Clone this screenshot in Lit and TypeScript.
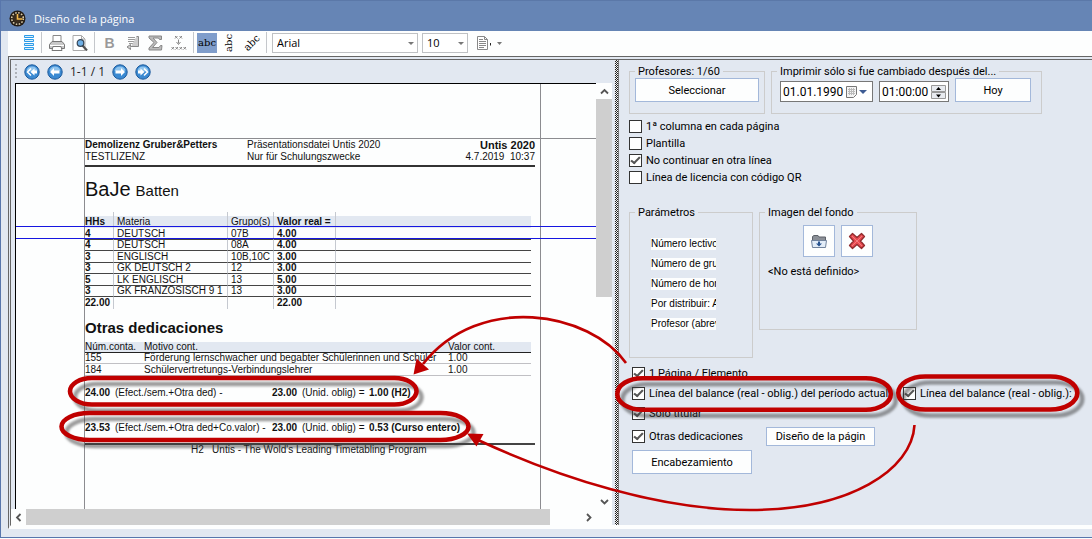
import { LitElement, html, css, svg } from "lit";
import { customElement, property } from "lit/decorators.js";

interface Lesson { hours: string; subject: string; group: string; value: string; }
interface Duty { account: string; reason: string; value: string; }

const LESSONS: Lesson[] = [
  { hours: "4", subject: "DEUTSCH", group: "07B", value: "4.00" },
  { hours: "4", subject: "DEUTSCH", group: "08A", value: "4.00" },
  { hours: "3", subject: "ENGLISCH", group: "10B,10C", value: "3.00" },
  { hours: "3", subject: "GK DEUTSCH 2", group: "12", value: "3.00" },
  { hours: "5", subject: "LK ENGLISCH", group: "13", value: "5.00" },
  { hours: "3", subject: "GK FRANZÖSISCH 9 1", group: "13", value: "3.00" },
];

const DUTIES: Duty[] = [
  { account: "155", reason: "Förderung lernschwacher und begabter Schülerinnen und Schüler", value: "1.00" },
  { account: "184", reason: "Schülervertretungs-Verbindungslehrer", value: "1.00" },
];

const PARAMETERS = [
  "Número lectivo",
  "Número de grupo",
  "Número de horas",
  "Por distribuir: Aula",
  "Profesor (abrev.)",
];

const base = css`
  *, *::before, *::after { box-sizing: border-box; }
  button, input, select {
    font: inherit;
    color: inherit;
    margin: 0;
    padding: 0;
    border-radius: 0;
  }
  svg { display: block; }
`;

/** Tick box with its label. */
@customElement("check-option")
class CheckOption extends LitElement {
  static styles = [base, css`
    :host { display: block; }
    .option { display: flex; align-items: center; gap: 4px; line-height: 13px; white-space: nowrap; }
    .box {
      appearance: none;
      flex: none;
      width: 13px;
      height: 13px;
      border: 1px solid #333;
      background: #fff;
      display: grid;
      place-items: center;
    }
    .box:checked::before {
      content: "";
      width: 9px;
      height: 5px;
      margin-top: -3px;
      border-left: 2px solid #555;
      border-bottom: 2px solid #555;
      transform: rotate(-45deg) skewX(8deg);
    }
  `];
  @property() label = "";
  @property({ type: Boolean }) checked = false;
  render() {
    return html`<label class="option"><input class="box" type="checkbox" .checked=${this.checked} />${this.label}</label>`;
  }
}

/** Window caption. */
@customElement("title-bar")
class TitleBar extends LitElement {
  static styles = [base, css`
    :host {
      display: flex;
      align-items: center;
      gap: 8px;
      height: 31px;
      padding: 5px 8px 0;
      border-top: 1px solid #5b78a8;
      background: #6685b5;
      color: #fff;
      font: 11px/18px "Open Sans", "Noto Sans", sans-serif;
    }
    .title { font: inherit; margin: 0; }
  `];
  render() {
    return html`
      <svg width="17" height="17" viewBox="0 0 17 17" aria-hidden="true">
        <circle cx="8.5" cy="8.500" r="8" fill="#241c14" />
        <circle cx="8.500" cy="8.500" r="5.800" fill="none" stroke="#d8c9a8" stroke-width="1.600" stroke-dasharray="1.600 1.430" />
        <circle cx="8.500" cy="8.500" r="4.600" fill="#3a2c1c" />
        <path d="M8.500 4v5h5" fill="none" stroke="#f5b94a" stroke-width="1.600" />
      </svg>
      <h1 class="title">Diseño de la página</h1>`;
  }
}

/** Formatting commands. */
@customElement("format-bar")
class FormatBar extends LitElement {
  static styles = [base, css`
    :host {
      display: flex;
      align-items: center;
      height: 25px;
      padding: 0 11px 2px;
      background: #fdfefe;
      font: 11px "Open Sans", "Noto Sans", sans-serif;
      color: #000;
    }
    .tool {
      width: 23px;
      height: 20px;
      flex: none;
      display: grid;
      place-items: center;
      border: 0;
      background: none;
    }
    .first { width: 19px; }
    .pressed { width: 20px; background: #7f9dcb; }
    .rule { flex: none; width: 1px; height: 21px; background: #c4c7cb; margin: 0 3px; }
    .picks { display: flex; gap: 4px; margin-left: 2px; }
    .pick { position: relative; flex: none; }
    .field {
      appearance: none;
      display: block;
      height: 20px;
      border: 1px solid #bfc1c4;
      background: #fff;
      padding-left: 4px;
      line-height: 18px;
    }
    .family { width: 146px; }
    .size { width: 46px; }
    .caret { position: absolute; right: 4px; top: 9px; pointer-events: none; }
    .abc { font: 10px/12px "DejaVu Serif", serif; }
    .up { transform: rotate(-90deg); }
    .slant { transform: rotate(-45deg); }
    .menu { width: 32px; margin-left: 5px; }
    .bold { font: bold 14px/16px "Liberation Sans", sans-serif; color: #9a9a9a; }
  `];
  render() {
    return html`
      <button class="tool first" aria-label="Diseño">
        <svg width="10" height="15" viewBox="0 0 10 15" fill="#d9effb" stroke="#2b9be8">
          <path d="M.5.5h9v2h-9zM.5 4.500h9v2h-9zM.5 8.500h9v2h-9zM.5 12.500h9v2h-9z" />
        </svg>
      </button>
      <span class="rule"></span>
      <button class="tool" aria-label="Imprimir">
        <svg width="16" height="16" viewBox="0 0 16 16">
          <path d="M4 .5h8V7H4z" fill="#fff" stroke="#888" />
          <path d="M3 6.500h10l2.500 3v4H.5v-4z" fill="#c8c8c8" stroke="#777" />
          <path d="M1 10.500h14" stroke="#fff" />
          <path d="M4 11.500h8l1 4H3z" fill="#fff" stroke="#777" />
        </svg>
      </button>
      <button class="tool" aria-label="Vista previa">
        <svg width="16" height="16" viewBox="0 0 16 16">
          <path d="M1 .5h8.500L13 4v11.500H1z" fill="#fff" stroke="#aaa" />
          <path d="M9.500.5V4H13" fill="none" stroke="#aaa" />
          <path d="M10.500 10.500l4.500 5" stroke="#555" stroke-width="2.200" />
          <circle cx="8.500" cy="8" r="3.300" fill="#6fb0e6" stroke="#345" stroke-width="1.200" />
        </svg>
      </button>
      <span class="rule"></span>
      <button class="tool bold" aria-label="Negrita">B</button>
      <button class="tool" aria-label="Ajuste de línea">
        <svg width="14" height="15" viewBox="0 0 14 15" fill="none" stroke="#999">
          <path d="M2 2.500h7M2 4.500h7M2 6.500h7M3 8.500h6" />
          <path d="M10.500 1.500h2v10h-8V9.500L1 12l3.500 2.500v-2" fill="#ccc" stroke="#888" />
        </svg>
      </button>
      <button class="tool" aria-label="Sumar">
        <svg width="15" height="16" viewBox="0 0 15 16" fill="#bbb" stroke="#888">
          <path d="M1 1h12.500v3.500h-2L10.500 3H5l4 4.500L4.500 12.500H11l1.500-2h1.500L13.500 15H1v-2l5-5.500L1 3z" />
        </svg>
      </button>
      <button class="tool" aria-label="Espacio">
        <svg width="16" height="16" viewBox="0 0 16 16" fill="none" stroke="#888">
          <path d="M4 1l2.500 2.500M6.500 1L4 3.500M8.500 1L11 3.500M11 1L8.500 3.500M.5 12L3 14.500M3 12L.5 14.500M4.500 12L7 14.500M7 12l-2.500 2.500M8.500 12l2.500 2.500M11 12l-2.500 2.500M12.500 12l2.500 2.500M15 12l-2.500 2.500" />
          <path d="M7.500 4.500v4M5.500 7l2 2.500 2-2.500" />
        </svg>
      </button>
      <span class="rule"></span>
      <button class="tool pressed" aria-pressed="true"><span class="abc">abc</span></button>
      <button class="tool" aria-pressed="false"><span class="abc up">abc</span></button>
      <button class="tool" aria-pressed="false"><span class="abc slant">abc</span></button>
      <span class="rule"></span>
      <div class="picks">
        <div class="pick">
          <select class="field family" aria-label="Fuente"><option>Arial</option></select>
          ${this.caret()}
        </div>
        <div class="pick">
          <select class="field size" aria-label="Tamaño"><option>10</option></select>
          ${this.caret()}
        </div>
      </div>
      <button class="tool menu" aria-label="Página">
        <svg width="26" height="14" viewBox="0 0 26 14" fill="none" stroke="#888">
          <path d="M1.500.5h7l3 3v10h-10zM8.500.5v3h3" fill="#fff" />
          <path d="M3 3.500h4M3 5.500h7M3 7.500h7M3 9.500h7M3 11.500h5" />
          <path d="M14.500 7v2.500" stroke="#222" />
          <path d="M21 6h5l-2.500 3z" fill="#777" stroke="none" />
        </svg>
      </button>`;
  }
  private caret() {
    return html`<svg class="caret" width="6" height="3" viewBox="0 0 6 3"><path d="M0 0h6L3 3z" fill="#777" /></svg>`;
  }
}

/** Page turning strip over the preview. */
@customElement("page-turner")
class PageTurner extends LitElement {
  static styles = [base, css`
    :host {
      display: flex;
      align-items: center;
      gap: 7px;
      height: 23px;
      padding-left: 4px;
      font: 12px "Open Sans", "Noto Sans", sans-serif;
      color: #222;
    }
    .grip { flex: none; width: 2px; height: 16px; background: repeating-linear-gradient(#aeb2b8 0 2px, transparent 2px 4px); }
    .turn { width: 16px; height: 16px; border: 0; background: none; }
  `];
  private turn(name: string, mark: unknown) {
    return html`<button class="turn" aria-label=${name}>
      <svg width="16" height="16" viewBox="0 0 16 16">
        <circle cx="8" cy="8" r="7.200" fill="#3b8ad2" stroke="#1c5a9c" />
        <path d="M2.500 6.500a5.800 5.800 0 0 1 11 0q-5.500 2.500-11 0z" fill="#8fc4ee" />
        ${mark}
      </svg>
    </button>`;
  }
  render() {
    const one = "M3 8l4-4v2.500h5.500v3H7V12z";
    return html`
      <span class="grip"></span>
      ${this.turn("Primera", svg`<path d="M7 4.500L3.500 8 7 11.500" fill="none" stroke="#fff" stroke-width="1.600" /><path d="M6.500 8l4-3.500v2H13v3h-2.500v2z" fill="#fff" />`)}
      ${this.turn("Anterior", svg`<path d=${one} fill="#fff" />`)}
      <span class="place">1-1 / 1</span>
      ${this.turn("Siguiente", svg`<path d=${one} fill="#fff" transform="rotate(180 8 8)" />`)}
      ${this.turn("Última", svg`<path d="M9 4.500L12.500 8 9 11.500" fill="none" stroke="#fff" stroke-width="1.600" /><path d="M9.500 8l-4-3.500v2H3v3h2.500v2z" fill="#fff" />`)}`;
  }
}

/** The printed report. */
@customElement("report-sheet")
class ReportSheet extends LitElement {
  static styles = [base, css`
    :host {
      display: block;
      position: relative;
      overflow: hidden;
      border: solid #000;
      border-width: 1px 0 0 1px;
      background: #fdfefe;
      color: #111;
      font: 10px/12px "Liberation Sans", Arial, sans-serif;
      padding: 55px 61px 0 69px;
    }
    .guide { position: absolute; background: #8c8c90; }
    .top { left: 0; right: 0; top: 54px; height: 1px; }
    .left { left: 68px; top: 0; bottom: 0; width: 1px; }
    .right { right: 55px; top: 0; bottom: 0; width: 1px; }
    .band { position: absolute; left: 0; right: 0; top: 142px; height: 13px; border: solid #1616e0; border-width: 1px 0; }
    .head { display: grid; grid-template-columns: 162px 1fr auto; align-content: start; height: 28px; border-bottom: 2px solid #333; }
    .strong { font-weight: bold; }
    .end { text-align: right; white-space: pre; }
    .edition { font-size: 11px; }
    .name { display: flex; align-items: baseline; gap: 5px; margin: 8px 0 0; font-size: 15px; line-height: 28px; font-weight: normal; }
    .short { font-size: 20px; }
    .lessons, .duties { border-collapse: separate; border-spacing: 0; table-layout: fixed; width: 446px; line-height: 11px; }
    .lessons { margin-top: 7px; }
    .lessons th, .lessons td { padding: 0 0 0 3px; text-align: left; white-space: nowrap; vertical-align: top; border-left: 1px solid #c5c9d0; font-weight: normal; height: 12px; }
    .lessons tr > :first-child { padding-left: 0; border-left: 0; }
    .lessons .lead { height: 4px; line-height: 4px; }
    .lessons .title { background: #e2e8f1; }
    .lessons .entry { border-bottom: 1px solid #444; }
    .lessons .tight { height: 11px; line-height: 10px; }
    .lessons .strong { font-weight: bold; }
    .c1 { width: 28px; } .c2 { width: 114px; } .c3 { width: 46px; } .c4 { width: 62px; }
    .section { margin: 9px 0 4px; font-size: 15px; line-height: 20px; font-weight: bold; }
    .duties th, .duties td { padding: 0; text-align: left; font-weight: normal; white-space: nowrap; line-height: 10px; height: 11px; border-bottom: 1px solid #c0c0c4; }
    .duties th { background: #e2e8f1; border-color: #222; }
    .duties .roomy { line-height: 11px; height: 12px; }
    .d1 { width: 59px; } .d2 { width: 304px; }
    .balance { display: grid; grid-template-columns: 30px 157px 30px 67px 1fr; white-space: nowrap; margin: 11px 0 23px; }
    .last { margin-bottom: 9px; }
    .foot { border-top: 2px solid #444; padding-left: 106px; line-height: 10px; white-space: pre; }
  `];
  private balance(total: string, formula: string, result: string, last = false) {
    return html`<div class="balance ${last ? "last" : ""}">
      <span class="strong">${total}</span><span>${formula}</span><span class="strong">23.00</span><span>(Unid. oblig) =</span><span class="strong">${result}</span>
    </div>`;
  }
  render() {
    return html`
      <div class="head">
        <span class="strong">Demolizenz Gruber&amp;Petters</span><span>Präsentationsdatei Untis 2020</span><span class="strong end edition">Untis 2020</span>
        <span>TESTLIZENZ</span><span>Nur für Schulungszwecke</span><span class="end">4.7.2019  10:37</span>
      </div>
      <h2 class="name"><span class="short">BaJe</span><span>Batten</span></h2>
      <table class="lessons">
        <colgroup><col class="c1" /><col class="c2" /><col class="c3" /><col class="c4" /><col /></colgroup>
        <thead>
          <tr><td class="lead"></td><td class="lead"></td><td class="lead"></td><td class="lead"></td><td class="lead"></td></tr>
          <tr><th class="title strong">HHs</th><th class="title">Materia</th><th class="title">Grupo(s)</th><th class="title strong">Valor real =</th><th class="title"></th></tr>
        </thead>
        <tbody>
          ${LESSONS.map((l, i) => {
            const c = i % 2 ? "entry tight" : "entry";
            return html`<tr><td class="${c} strong">${l.hours}</td><td class=${c}>${l.subject}</td><td class=${c}>${l.group}</td><td class="${c} strong">${l.value}</td><td class=${c}></td></tr>`;
          })}
          <tr><td class="strong">22.00</td><td></td><td></td><td class="strong">22.00</td><td></td></tr>
        </tbody>
      </table>
      <h3 class="section">Otras dedicaciones</h3>
      <table class="duties">
        <colgroup><col class="d1" /><col class="d2" /><col /></colgroup>
        <thead><tr><th>Núm.conta.</th><th>Motivo cont.</th><th>Valor cont.</th></tr></thead>
        <tbody>${DUTIES.map((d, i) => {
          const c = i % 2 ? "roomy" : "";
          return html`<tr><td class=${c}>${d.account}</td><td class=${c}>${d.reason}</td><td class=${c}>${d.value}</td></tr>`;
        })}</tbody>
      </table>
      ${this.balance("24.00", "(Efect./sem.+Otra ded) -", "1.00 (H2)")}
      ${this.balance("23.53", "(Efect./sem.+Otra ded+Co.valor) -", "0.53 (Curso entero)", true)}
      <div class="foot">H2   Untis - The Wold's Leading Timetabling Program</div>
      <div class="guide top"></div><div class="guide left"></div><div class="guide right"></div>
      <div class="band"></div>`;
  }
}

/** Options beside the preview. */
@customElement("option-panel")
class OptionPanel extends LitElement {
  static styles = [base, css`
    :host {
      display: block;
      background: #e2e8f1;
      color: #000;
      font: 11px/13px Roboto, "Liberation Sans", sans-serif;
      padding: 5px 8px 0 10px;
    }
    .row { display: flex; gap: 6px; align-items: flex-start; }
    .group { border: 1px solid #ccc; margin: 0; padding: 0; min-width: 0; }
    .group legend { padding: 0 3px; margin-left: 5px; }
    .teachers { width: 136px; height: 49px; }
    .changed { width: 271px; height: 49px; }
    .choose { padding: 0 5px; }
    .when { padding: 0 8px; align-items: flex-end; }
    .push { height: 24px; border: 1px solid #a3b8da; background: #fdfefe; text-align: center; white-space: nowrap; }
    .wide { width: 100%; }
    .today { width: 76px; }
    .entry { display: flex; align-items: center; height: 21px; border: 1px solid #777; background: #fff; }
    .text { border: 0; background: none; flex: 1; min-width: 0; padding-left: 2px; height: 17px; outline: 0; font-size: 12px; }
    .date { width: 93px; padding-right: 5px; gap: 2px; }
    .time { width: 70px; padding-right: 2px; }
    .first { display: grid; gap: 4px; margin: 6px 0 22px; }
    .params { width: 124px; height: 152px; }
    .list { display: grid; gap: 8px; padding: 19px 0 0 21px; }
    .item { width: 65px; height: 12px; line-height: 12px; background: #fdfefe; overflow: hidden; white-space: nowrap; font-family: "Liberation Sans", sans-serif; font-size: 10px; }
    .image { width: 158px; height: 124px; }
    .icons { display: flex; justify-content: center; gap: 6px; padding-top: 6px; }
    .icon { width: 32px; height: 32px; display: grid; place-items: center; border: 1px solid #a3b8da; background: #fdfefe; }
    .none { margin: 8px 0 0 8px; }
    .more { display: grid; grid-template-columns: 134px 137px 1fr; row-gap: 7px; margin: 9px 0 0 3px; align-items: center; }
    .span2 { grid-column: span 2; }
    .all { grid-column: 1 / -1; }
    .design { width: 109px; height: 19px; }
    .header { width: 120px; margin: 4px 0 0 3px; }
  `];
  render() {
    return html`
      <div class="row">
        <fieldset class="group teachers">
          <legend>Profesores: 1/60</legend>
          <div class="choose"><button class="push wide">Seleccionar</button></div>
        </fieldset>
        <fieldset class="group changed">
          <legend>Imprimir sólo si fue cambiado después del...</legend>
          <div class="row when">
            <div class="entry date">
              <input class="text" aria-label="Fecha" value="01.01.1990" />
              <svg width="11" height="12" viewBox="0 0 11 12"><path d="M.5.5h10v8l-3 3h-7z" fill="#f4f4f4" stroke="#777" /><path d="M2 3.500h7M2 5.500h7M2 7.500h7M3.500 2v7M5.500 2v7M7.500 2v7" stroke="#bbb" fill="none" /></svg>
              <svg width="8" height="4" viewBox="0 0 8 4"><path d="M0 0h8L4 4z" fill="#3e5c94" /></svg>
            </div>
            <div class="entry time">
              <input class="text" aria-label="Hora" value="01:00:00" />
              <svg width="15" height="14" viewBox="0 0 15 14"><path d="M.5.5h14v6H.5zM.5 7.500h14v6H.5z" fill="#e8ebf0" stroke="#999" /><path d="M5 5l2.500-3L10 5zM5 9.500h5l-2.500 3z" fill="#000" /></svg>
            </div>
            <button class="push today">Hoy</button>
          </div>
        </fieldset>
      </div>
      <div class="first">
        <check-option label="1ª columna en cada página"></check-option>
        <check-option label="Plantilla"></check-option>
        <check-option label="No continuar en otra línea" checked></check-option>
        <check-option label="Línea de licencia con código QR"></check-option>
      </div>
      <div class="row">
        <fieldset class="group params">
          <legend>Parámetros</legend>
          <div class="list">${PARAMETERS.map((p) => html`<div class="item">${p}</div>`)}</div>
        </fieldset>
        <fieldset class="group image">
          <legend>Imagen del fondo</legend>
          <div class="icons">
            <button class="icon" aria-label="Abrir imagen">
              <svg width="16" height="13" viewBox="0 0 16 13"><path d="M1.500 6V1.500L3 .5h4l1 1.500h6.500V6z" fill="#8a8f96" stroke="#5c6168" /><path d="M.5 5.500h15l-1 7h-13z" fill="#e3edf8" stroke="#71839c" /><path d="M7 6.500h2v2h2l-3 3-3-3h2z" fill="#28538f" /></svg>
            </button>
            <button class="icon" aria-label="Borrar imagen">
              <svg width="18" height="18" viewBox="0 0 18 18"><path d="M4.500 1.500L9 5.500l4.500-4 3 3L12.500 9l4 4.500-3 3L9 12.500l-4.500 4-3-3L5.500 9l-4-4.500z" fill="#e84a50" stroke="#8e2a2c" stroke-width="1.300" stroke-linejoin="round" /><path d="M4 4l10 10M14 4L4 14" stroke="#f57b7e" stroke-width="1" /></svg>
            </button>
          </div>
          <p class="none">&lt;No está definido&gt;</p>
        </fieldset>
      </div>
      <div class="more">
        <check-option class="all" label="1 Página / Elemento" checked></check-option>
        <check-option class="span2" label="Línea del balance (real - oblig.) del período actual" checked></check-option>
        <check-option label="Línea del balance (real - oblig.):" checked></check-option>
        <check-option class="all" label="Sólo titular" checked></check-option>
        <check-option label="Otras dedicaciones" checked></check-option>
        <button class="push design">Diseño de la págin</button>
      </div>
      <button class="push header">Encabezamiento</button>`;
  }
}

/** Red outlines and arrows drawn over the dialog. */
@customElement("callout-layer")
class CalloutLayer extends LitElement {
  static styles = css`
    :host { position: absolute; left: 0; top: 0; pointer-events: none; }
    .ink { display: block; }
    .ring { filter: drop-shadow(5px 6px 1px rgba(60, 60, 60, 0.5)); }
  `;
  render() {
    return html`<svg class="ink" width="1092" height="539" viewBox="0 0 1092 539" fill="none" stroke="#c00000" aria-hidden="true">
      <g class="ring" stroke-width="4.600">
        <rect x="70" y="378" width="346.500" height="26.500" rx="22" ry="13.200" />
        <rect x="61.500" y="413" width="407" height="27" rx="28" ry="13.500" />
        <rect x="617.300" y="378.200" width="273.500" height="31.500" rx="25" ry="15.700" />
        <rect x="898.300" y="376.500" width="179" height="33" rx="27" ry="16.500" />
      </g>
      <g stroke-width="2.600">
        <path d="M626 363C590 312 480 292 423 364" />
        <path d="M914.500 425C912 470 850 510 750 510 660 510 560 478 478 440" />
      </g>
      <g fill="#c00000" stroke="none">
        <path d="M413.500 374.500l3-16 12.500 11z" />
        <path d="M467 433.500l16.500.5-7 12.500z" />
      </g>
    </svg>`;
  }
}

@customElement("app-root")
class AppRoot extends LitElement {
  static styles = [base, css`
    :host {
      display: flex;
      flex-direction: column;
      box-sizing: border-box;
      position: relative;
      height: 100vh;
      min-height: 539px;
      overflow: hidden;
      padding-bottom: 1px;
      background: #fdfefe;
    }
    .window { flex: 1; display: flex; flex-direction: column; min-height: 0; border: solid #5876ac; border-width: 0 0 1px 1px; background: #e2e8f1; }
    .body { flex: 1; display: flex; flex-direction: column; min-height: 0; margin: 0 0 8px 7px; }
    .frame { flex: 1; display: flex; min-height: 0; border-top: 4px double #666; border-left: 3px double #666; border-bottom: 4px solid #fdfefe; background: #e2e8f1; }
    .preview { flex: none; width: 604px; display: flex; flex-direction: column; background: #e2e8f1; padding-right: 3px; }
    .view { flex: 1; display: flex; min-height: 0; padding-left: 4px; }
    .page { flex: 1; min-width: 0; }
    .vbar { width: 16px; display: flex; flex-direction: column; align-items: center; background: #fdfefe; }
    .hbar { height: 16px; display: flex; align-items: center; background: #fdfefe; }
    .nudge { flex: none; width: 15px; height: 16px; border: 0; background: none; display: grid; place-items: center; }
    .vthumb { width: 16px; height: 198px; background: #cfcfcf; margin-bottom: auto; }
    .hthumb { width: 524px; height: 16px; background: #cfcfcf; margin-right: auto; }
    .corner { width: 16px; }
    .split { flex: none; width: 4px; border-right: 1px solid #777; background: repeating-conic-gradient(#222 0 25%, #f4f4f4 0 50%) 0 0 / 2px 2px; }
    .options { flex: 1; min-width: 0; }
  `];
  private nudge(name: string, d: string) {
    return html`<button class="nudge" aria-label=${name}><svg width="9" height="9" viewBox="0 0 9 9" fill="none" stroke="#555" stroke-width="1.800"><path d=${d} /></svg></button>`;
  }
  render() {
    return html`
      <main class="window">
        <title-bar></title-bar>
        <div class="body">
          <format-bar></format-bar>
          <div class="frame">
            <section class="preview">
              <page-turner></page-turner>
              <div class="view">
                <report-sheet class="page"></report-sheet>
                <div class="vbar">${this.nudge("Arriba", "M1 6.500L4.500 3 8 6.500")}<div class="vthumb"></div>${this.nudge("Abajo", "M1 3l3.500 3.500L8 3")}</div>
              </div>
              <div class="hbar">${this.nudge("Izquierda", "M6.500 1L3 4.500 6.500 8")}<div class="hthumb"></div>${this.nudge("Derecha", "M3 1l3.500 3.500L3 8")}<div class="corner"></div></div>
            </section>
            <div class="split"></div>
            <option-panel class="options"></option-panel>
          </div>
        </div>
      </main>
      <callout-layer></callout-layer>`;
  }
}
